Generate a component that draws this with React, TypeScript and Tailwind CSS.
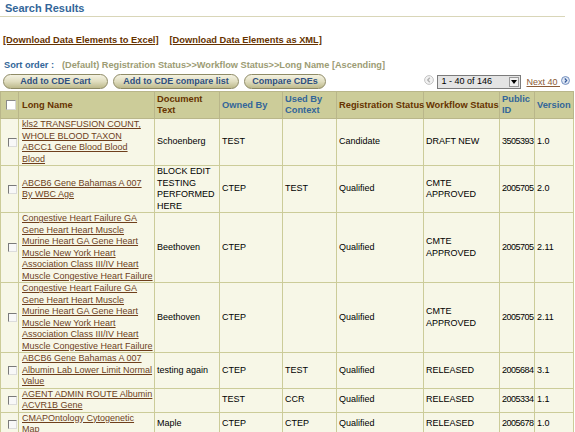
import React from "react"

type Row = {
  name: string
  doc: string
  owned: string
  used: string
  reg: string
  wf: string
  id: string
  ver: string
}

const heart =
  "Congestive Heart Failure GA\nGene Heart Heart Muscle\nMurine Heart GA Gene Heart\nMuscle New York Heart\nAssociation Class III/IV Heart\nMuscle Congestive Heart Failure"

const rows: Row[] = [
  { name: "kls2 TRANSFUSION COUNT,\nWHOLE BLOOD TAXON\nABCC1 Gene Blood Blood\nBlood", doc: "Schoenberg", owned: "TEST", used: "", reg: "Candidate", wf: "DRAFT NEW", id: "3505393", ver: "1.0" },
  { name: "ABCB6 Gene Bahamas A 007\nBy WBC Age", doc: "BLOCK EDIT TESTING PERFORMED HERE", owned: "CTEP", used: "TEST", reg: "Qualified", wf: "CMTE APPROVED", id: "2005705", ver: "2.0" },
  { name: heart, doc: "Beethoven", owned: "CTEP", used: "", reg: "Qualified", wf: "CMTE APPROVED", id: "2005705", ver: "2.11" },
  { name: heart, doc: "Beethoven", owned: "CTEP", used: "", reg: "Qualified", wf: "CMTE APPROVED", id: "2005705", ver: "2.11" },
  { name: "ABCB6 Gene Bahamas A 007\nAlbumin Lab Lower Limit Normal\nValue", doc: "testing again", owned: "CTEP", used: "TEST", reg: "Qualified", wf: "RELEASED", id: "2005684", ver: "3.1" },
  { name: "AGENT ADMIN ROUTE Albumin\nACVR1B Gene", doc: "", owned: "TEST", used: "CCR", reg: "Qualified", wf: "RELEASED", id: "2005334", ver: "1.1" },
  { name: "CMAPOntology Cytogenetic\nMap", doc: "Maple", owned: "CTEP", used: "CTEP", reg: "Qualified", wf: "RELEASED", id: "2005678", ver: "1.0" },
]

function Checkbox({ big }: { big?: boolean }) {
  return (
    <span
      className={
        big
          ? "block w-[10px] h-[10px] bg-white border border-t-[#8a8a8a] border-l-[#8a8a8a] border-b-[#d8d8d8] border-r-[#d8d8d8]"
          : "block w-[9px] h-[9px] bg-[#f8f8f8] border border-t-[#7a7a7a] border-l-[#7a7a7a] border-b-[#dcdcdc] border-r-[#dcdcdc]"
      }
    />
  )
}

function PillButton({ label, w }: { label: string; w: string }) {
  return (
    <button
      className={`${w} h-[15px] rounded-full border border-[#8f8b66] bg-gradient-to-b from-[#f4f2e2] via-[#e0ddbf] to-[#bdb98c] text-[9px] font-bold leading-none text-[#2e4f80]`}
    >
      {label}
    </button>
  )
}

const th = "border border-[#b9b68a] px-[2px] py-[2px] text-left align-middle text-[9.3px] font-bold leading-[11px]"
const td = "border border-[#cccc99] px-[2px] align-middle"

export default function App() {
  return (
    <div className="w-[575px] h-screen overflow-hidden bg-white font-['Liberation_Sans',Arial,sans-serif] text-black">
      <div className="pl-[5px] pt-[1px] h-[16px] text-[11px] font-bold leading-[14px] text-[#336699]">Search Results</div>
      <div className="w-[565px] h-px bg-[#d9d6b8]" />

      <div className="mt-[17px] flex gap-[11px] pl-[3px] text-[9.3px] font-bold leading-[12px] text-[#663300]">
        <a className="underline">[Download Data Elements to Excel]</a>
        <a className="underline">[Download Data Elements as XML]</a>
      </div>

      <div className="mt-[13px] flex gap-[8px] pl-[4px] text-[9.2px] font-bold leading-[12px]">
        <span className="text-[#336699]">Sort order :</span>
        <span className="text-[#9c9c74]">(Default) Registration Status&gt;&gt;Workflow Status&gt;&gt;Long Name [Ascending]</span>
      </div>

      <div className="mt-[3px] flex items-center justify-between pl-[3px] pr-[5px]">
        <div className="flex gap-[5px]">
          <PillButton label="Add to CDE Cart" w="w-[105px]" />
          <PillButton label="Add to CDE compare list" w="w-[126px]" />
          <PillButton label="Compare CDEs" w="w-[82px]" />
        </div>
        <div className="flex items-center">
          <svg width="10" height="10" viewBox="0 0 10 10" className="mr-[3px] -mt-[3px]">
            <circle cx="5" cy="5" r="4.4" fill="#f2f2f2" stroke="#c4c4c4" strokeWidth="1" />
            <path d="M5.8 2.8 L3.7 5 L5.8 7.2" fill="none" stroke="#b0b0b0" strokeWidth="1.3" />
          </svg>
          <div className="w-[84px] h-[14px] flex items-center border border-[#7b7b7b] bg-[#e4e4e4]">
            <span className="flex-1 pl-[3px] text-[9px] leading-none">1 - 40 of 146</span>
            <span className="mr-[1px] w-[10px] h-[10px] flex items-center justify-center bg-[#f0f0f0] border border-[#9a9a9a]">
              <svg width="6" height="4" viewBox="0 0 6 4">
                <path d="M0 0 H6 L3 4 Z" fill="#000" />
              </svg>
            </span>
          </div>
          <a className="ml-[5px] text-[9px] leading-[12px] text-[#8a5a36] underline">Next 40&nbsp;</a>
          <svg width="9" height="9" viewBox="0 0 10 10" className="ml-[1px] -mt-[3px]">
            <circle cx="5" cy="5" r="4.4" fill="#dfe7f4" stroke="#6685b8" strokeWidth="1" />
            <path d="M4.2 2.8 L6.3 5 L4.2 7.2" fill="none" stroke="#34599a" strokeWidth="1.3" />
          </svg>
        </div>
      </div>

      <table className="mt-[2px] w-[573px] table-fixed border-collapse">
        <colgroup>
          <col className="w-[18px]" />
          <col className="w-[136px]" />
          <col className="w-[65px]" />
          <col className="w-[63px]" />
          <col className="w-[54px]" />
          <col className="w-[87px]" />
          <col className="w-[76px]" />
          <col className="w-[35px]" />
          <col className="w-[39px]" />
        </colgroup>
        <thead>
          <tr className="h-[26px] bg-[#cccc99]">
            <th className={th}>
              <div className="pl-[3px]">
                <Checkbox big />
              </div>
            </th>
            <th className={`${th} text-[#663300] pl-[3px]`}>Long Name</th>
            <th className={`${th} text-[#663300]`}>Document Text</th>
            <th className={`${th} text-[#336699]`}>Owned By</th>
            <th className={`${th} text-[#336699]`}>Used By Context</th>
            <th className={`${th} text-[#663300] whitespace-nowrap`}>Registration Status</th>
            <th className={`${th} text-[#663300] whitespace-nowrap`}>Workflow Status</th>
            <th className={`${th} text-[#336699]`}>Public ID</th>
            <th className={`${th} text-[#336699]`}>Version</th>
          </tr>
        </thead>
        <tbody className="bg-[#f7f7e7] text-[9px] leading-[11.5px]">
          {rows.map((r, i) => (
            <tr key={i}>
              <td className={td}>
                <div className="pl-[5px]">
                  <Checkbox />
                </div>
              </td>
              <td className={`${td} pl-[3px] whitespace-pre text-[#6e3f1c]`}>
                <a className="underline">{r.name}</a>
              </td>
              <td className={td}>{r.doc}</td>
              <td className={td}>{r.owned}</td>
              <td className={td}>{r.used}</td>
              <td className={td}>{r.reg}</td>
              <td className={td}>{r.wf}</td>
              <td className={`${td} px-[1px] whitespace-nowrap tracking-[-0.5px]`}>{r.id}</td>
              <td className={`${td} px-[1px]`}>{r.ver}</td>
            </tr>
          ))}
        </tbody>
      </table>
    </div>
  )
}
